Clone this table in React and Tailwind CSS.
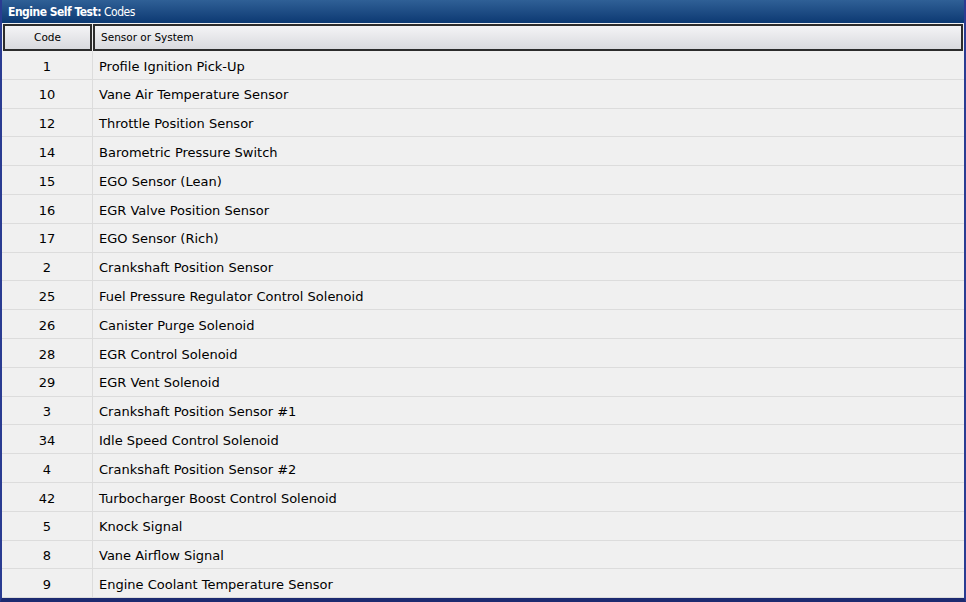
const rows = [
  ['1', 'Profile Ignition Pick-Up'],
  ['10', 'Vane Air Temperature Sensor'],
  ['12', 'Throttle Position Sensor'],
  ['14', 'Barometric Pressure Switch'],
  ['15', 'EGO Sensor (Lean)'],
  ['16', 'EGR Valve Position Sensor'],
  ['17', 'EGO Sensor (Rich)'],
  ['2', 'Crankshaft Position Sensor'],
  ['25', 'Fuel Pressure Regulator Control Solenoid'],
  ['26', 'Canister Purge Solenoid'],
  ['28', 'EGR Control Solenoid'],
  ['29', 'EGR Vent Solenoid'],
  ['3', 'Crankshaft Position Sensor #1'],
  ['34', 'Idle Speed Control Solenoid'],
  ['4', 'Crankshaft Position Sensor #2'],
  ['42', 'Turbocharger Boost Control Solenoid'],
  ['5', 'Knock Signal'],
  ['8', 'Vane Airflow Signal'],
  ['9', 'Engine Coolant Temperature Sensor'],
];

export default function App() {
  return (
    <div className="flex h-[602px] w-[966px] flex-col overflow-hidden border-x-2 border-b-4 border-x-[#2a3c92] border-b-[#1c2a70] bg-[#f0f0f0] font-['DejaVu_Sans',sans-serif] text-black">
      <div className="flex h-[23px] shrink-0 items-center bg-gradient-to-b from-[#2f6096] to-[#0c3973] pl-[6px] font-['DejaVu_Sans_Condensed','DejaVu_Sans',sans-serif] text-[12px] text-white">
        <span className="font-bold tracking-[-0.5px]">Engine Self Test:</span>
        <span className="ml-[3px] tracking-[-0.5px]">Codes</span>
      </div>
      <div className="flex h-[28px] shrink-0 px-[1px] pt-[1px]">
        <div className="flex w-[89px] items-center justify-center border-2 border-[#2c2c2c] bg-gradient-to-b from-[#f4f4f6] to-[#d9dade] text-[10.5px]">
          Code
        </div>
        <div className="ml-[1px] flex flex-1 items-center border-2 border-[#2c2c2c] bg-gradient-to-b from-[#f4f4f6] to-[#d9dade] pl-[6px] text-[10.5px]">
          Sensor or System
        </div>
      </div>
      <div className="flex flex-col">
        {rows.map(([code, name]) => (
          <div key={code} className="flex h-[28.8px] border-b border-[#dcdcdc] text-[13px]">
            <div className="flex w-[91px] items-center justify-center border-r border-[#dcdcdc] pt-[3px]">{code}</div>
            <div className="flex items-center pl-[6px] pt-[3px]">{name}</div>
          </div>
        ))}
      </div>
    </div>
  );
}
